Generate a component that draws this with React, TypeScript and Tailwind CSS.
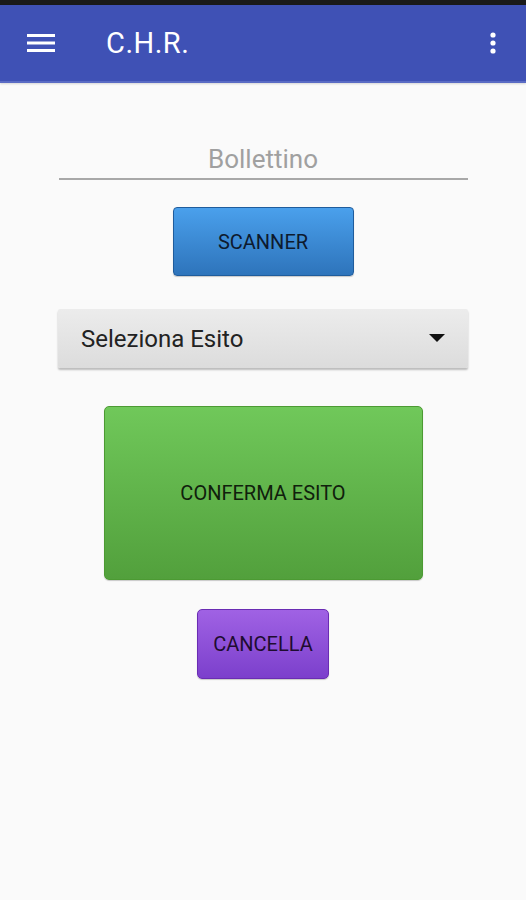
function Hamburger() {
  return (
    <svg width="28" height="20" viewBox="0 0 28 20" className="block">
      <rect x="0" y="1" width="28" height="3" fill="white" />
      <rect x="0" y="8.5" width="28" height="3" fill="white" />
      <rect x="0" y="16" width="28" height="3" fill="white" />
    </svg>
  );
}

function Overflow() {
  return (
    <svg width="8" height="22" viewBox="0 0 8 22" className="block">
      <circle cx="4" cy="3" r="2.6" fill="white" />
      <circle cx="4" cy="11" r="2.6" fill="white" />
      <circle cx="4" cy="19" r="2.6" fill="white" />
    </svg>
  );
}

export default function App() {
  return (
    <div
      className="w-[526px] h-[900px] bg-[#fafafa] flex flex-col"
      style={{ fontFamily: 'Roboto, "Noto Sans", sans-serif' }}
    >
      {/* status bar strip */}
      <div className="h-[5px] bg-[#1a1a1a]" />

      {/* app bar */}
      <header className="h-[78px] bg-[#3f51b5] flex items-center pl-[27px] pr-[29px] border-b-2 border-[#5a6bc4] shadow-[0_1px_2px_rgba(0,0,0,0.15)]">
        <Hamburger />
        <h1 className="ml-[51px] text-white text-[29px] leading-none tracking-[0.5px]">C.H.R.</h1>
        <div className="ml-auto">
          <Overflow />
        </div>
      </header>

      <main className="flex flex-col items-center">
        {/* bollettino input */}
        <div className="mt-[61px] w-[409px] border-b-2 border-[#a8a8a8] flex justify-center pb-[4px]">
          <span className="text-[26px] leading-[30px] text-[#a0a0a0]">Bollettino</span>
        </div>

        <button className="mt-[27px] w-[181px] h-[69px] rounded-[4px] border border-[#1f5c9c] bg-gradient-to-b from-[#4aa0ec] to-[#2e74bb] text-[20px] text-[#0d1a2e] shadow-[0_1px_1px_rgba(0,0,0,0.2)]">
          SCANNER
        </button>

        {/* spinner */}
        <div className="mt-[33px] w-[410px] h-[59px] rounded-[2px] bg-gradient-to-b from-[#ececec] to-[#dcdcdc] shadow-[0_2px_2px_rgba(0,0,0,0.25)] flex items-center pl-[23px] pr-[23px]">
          <span className="text-[24px] text-[#222]">Seleziona Esito</span>
          <svg width="16" height="9" viewBox="0 0 16 9" className="ml-auto">
            <polygon points="0,0 16,0 8,8" fill="#111" />
          </svg>
        </div>

        <button className="mt-[38px] w-[319px] h-[174px] rounded-[5px] border border-[#4c9a33] bg-gradient-to-b from-[#70c85a] to-[#52a03c] text-[20px] text-[#10200c] shadow-[0_1px_1px_rgba(0,0,0,0.2)]">
          CONFERMA ESITO
        </button>

        <button className="mt-[29px] w-[132px] h-[70px] rounded-[5px] border border-[#6a2cb3] bg-gradient-to-b from-[#a062e4] to-[#7c3fcc] text-[20px] text-[#1e0c30] shadow-[0_1px_1px_rgba(0,0,0,0.2)]">
          CANCELLA
        </button>
      </main>
    </div>
  );
}
